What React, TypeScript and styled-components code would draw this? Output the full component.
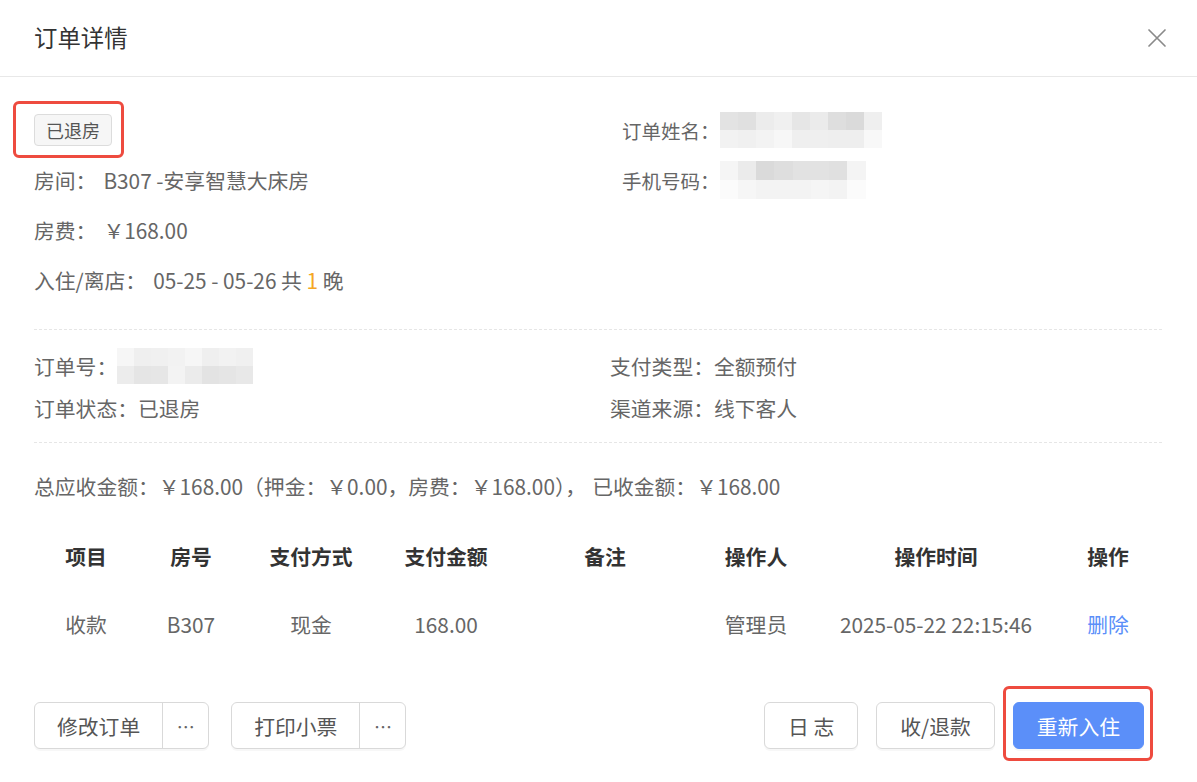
import styled, { createGlobalStyle } from 'styled-components';

const GlobalStyle = createGlobalStyle`
    * {
        box-sizing: border-box;
    }
    html,
    body {
        margin: 0;
        padding: 0;
        background: #fff;
    }
    body {
        font-family: 'Noto Sans CJK SC', 'Noto Sans', sans-serif;
        font-size: 20.8px;
        color: #666;
    }
`;

// pixelated blocks standing in for hidden personal data
const NAME_SHADES = [
    ['#e3e3e3', '#e0e0e0', '#ececec', '#f0f0f0', '#e6e6e6', '#ebebeb', '#dedede', '#dadada', '#efefef'],
    ['#f2f2f2', '#f0f0f0', '#f3f3f3', '#f7f7f7', '#efefef', '#efefef', '#eeeeee', '#eeeeee', '#f8f8f8'],
];
const PHONE_SHADES = [
    ['#f5f5f5', '#ebebeb', '#dadada', '#dedede', '#e2e2e2', '#e2e2e2', '#e0e0e0', '#f4f4f4'],
    ['#fbfbfb', '#f6f6f6', '#f3f3f3', '#f3f3f3', '#f3f3f3', '#f5f5f5', '#f3f3f3', '#fbfbfb'],
];
const ORDER_SHADES = [
    ['#f6f6f6', '#efefef', '#f0f0f0', '#f2f2f2', '#f6f6f6', '#efefef', '#f2f2f2', '#f0f0f0'],
    ['#ececec', '#e5e5e5', '#e6e6e6', '#f3f3f3', '#ebebeb', '#e3e3e3', '#e5e5e5', '#e8e8e8'],
];

const COLUMNS = ['104px', '106px', '134px', '136px', '182px', '120px', '240px', '104px'];
const HEADERS = ['项目', '房号', '支付方式', '支付金额', '备注', '操作人', '操作时间', '操作'];

type Payment = {
    item: string;
    room: string;
    method: string;
    amount: string;
    remark: string;
    operator: string;
    time: string;
};

const payments: Payment[] = [
    {
        item: '收款',
        room: 'B307',
        method: '现金',
        amount: '168.00',
        remark: '',
        operator: '管理员',
        time: '2025-05-22 22:15:46',
    },
];

const Mosaic = ({ shades, cellW, cellH }: { shades: string[][]; cellW: number; cellH: number }) => (
    <MosaicGrid $cols={shades[0].length} $w={cellW} $h={cellH}>
        {shades.flat().map((shade, i) => (
            <MosaicCell key={i} $shade={shade} />
        ))}
    </MosaicGrid>
);

const CloseIcon = () => (
    <svg width='20' height='20' viewBox='0 0 20 20' fill='none'>
        <path d='M2 2 L18 18 M18 2 L2 18' stroke='#8a8a8a' strokeWidth='1.7' strokeLinecap='round' />
    </svg>
);

const App = () => {
    return (
        <>
            <GlobalStyle />
            <Dialog>
                <Header>
                    <Title>订单详情</Title>
                    <CloseButton aria-label='close'>
                        <CloseIcon />
                    </CloseButton>
                </Header>

                <Body>
                    <TopSection>
                        <Column>
                            <Line $h={50}>
                                <Marked $top={-13} $right={-12} $bottom={-12} $left={-21}>
                                    <StatusTag>已退房</StatusTag>
                                </Marked>
                            </Line>
                            <Line $h={50}>
                                房间：<Value>B307 -安享智慧大床房</Value>
                            </Line>
                            <Line $h={50}>
                                房费：<Value>￥168.00</Value>
                            </Line>
                            <Line $h={50}>
                                入住/离店：
                                <Value>
                                    05-25 - 05-26 共 <Nights>1</Nights> 晚
                                </Value>
                            </Line>
                        </Column>
                        <Column $size={19.5}>
                            <Line $h={50}>
                                订单姓名：
                                <Mosaic shades={NAME_SHADES} cellW={18} cellH={18} />
                            </Line>
                            <Line $h={50}>
                                手机号码：
                                <Mosaic shades={PHONE_SHADES} cellW={18.25} cellH={19} />
                            </Line>
                        </Column>
                    </TopSection>

                    <Divider />

                    <InfoSection>
                        <Line $h={42}>
                            订单号：
                            <Mosaic shades={ORDER_SHADES} cellW={17} cellH={18} />
                        </Line>
                        <Line $h={42}>支付类型：全额预付</Line>
                        <Line $h={42}>订单状态：已退房</Line>
                        <Line $h={42}>渠道来源：线下客人</Line>
                    </InfoSection>

                    <Divider />

                    <Summary>
                        总应收金额：￥168.00（押金：￥0.00，房费：￥168.00），<Received>已收金额：￥168.00</Received>
                    </Summary>

                    <Table>
                        <TableRow>
                            {HEADERS.map((h) => (
                                <HeadCell key={h}>{h}</HeadCell>
                            ))}
                        </TableRow>
                        {payments.map((p, i) => (
                            <TableRow key={i}>
                                <Cell>{p.item}</Cell>
                                <Cell>{p.room}</Cell>
                                <Cell>{p.method}</Cell>
                                <Cell>{p.amount}</Cell>
                                <Cell>{p.remark}</Cell>
                                <Cell>{p.operator}</Cell>
                                <Cell>{p.time}</Cell>
                                <Cell>
                                    <LinkButton>删除</LinkButton>
                                </Cell>
                            </TableRow>
                        ))}
                    </Table>

                    <Footer>
                        <ButtonGroup>
                            <SplitButton>
                                <SplitMain>修改订单</SplitMain>
                                <SplitMore>…</SplitMore>
                            </SplitButton>
                            <SplitButton>
                                <SplitMain>打印小票</SplitMain>
                                <SplitMore>…</SplitMore>
                            </SplitButton>
                        </ButtonGroup>
                        <ButtonGroup $gap={18}>
                            <Button>日 志</Button>
                            <Button>收/退款</Button>
                            <Marked $top={-16} $right={-9} $bottom={-12} $left={-10}>
                                <Button $primary>重新入住</Button>
                            </Marked>
                        </ButtonGroup>
                    </Footer>
                </Body>
            </Dialog>
        </>
    );
};

const Dialog = styled.div`
    width: 1197px;
    min-height: 782px;
    background: #fff;
`;

const Header = styled.header`
    height: 77px;
    display: flex;
    align-items: center;
    justify-content: space-between;
    padding: 0 30px 0 34px;
    border-bottom: 1px solid #e8e8e8;
`;

const Title = styled.h2`
    margin: 0;
    font-size: 23.4px;
    font-weight: 400;
    line-height: 1;
    color: #333;
`;

const CloseButton = styled.button`
    display: flex;
    padding: 0;
    border: none;
    background: none;
`;

const Body = styled.div`
    padding: 0 35px 0 34px;
`;

const TopSection = styled.div`
    display: grid;
    grid-template-columns: 588px 1fr;
    padding-top: 28px;
    margin-bottom: 24px;
`;

const Column = styled.div<{ $size?: number }>`
    display: flex;
    flex-direction: column;
    font-size: ${(p) => p.$size ?? 20.8}px;
`;

const InfoSection = styled.div`
    display: grid;
    grid-template-columns: 576px 1fr;
    padding: 15px 0 13px;
`;

const Line = styled.div<{ $h: number }>`
    display: flex;
    align-items: center;
    height: ${(p) => p.$h}px;
    white-space: nowrap;
    color: #666;
`;

const Value = styled.span`
    margin-left: 7px;
`;

const Nights = styled.span`
    color: #f5a623;
`;

const Marked = styled.span<{ $top: number; $right: number; $bottom: number; $left: number }>`
    position: relative;
    display: inline-flex;

    &::after {
        content: '';
        position: absolute;
        top: ${(p) => p.$top}px;
        right: ${(p) => p.$right}px;
        bottom: ${(p) => p.$bottom}px;
        left: ${(p) => p.$left}px;
        border: 3px solid #ee4b3f;
        border-radius: 6px;
        pointer-events: none;
    }
`;

const StatusTag = styled.span`
    display: inline-flex;
    align-items: center;
    height: 32px;
    padding: 0 11px;
    border: 1px solid #dcdcdc;
    border-radius: 4px;
    background: #f6f6f6;
    font-size: 18px;
    color: #555;
`;

const MosaicGrid = styled.span<{ $cols: number; $w: number; $h: number }>`
    display: inline-grid;
    grid-template-columns: repeat(${(p) => p.$cols}, ${(p) => p.$w}px);
    grid-auto-rows: ${(p) => p.$h}px;
`;

const MosaicCell = styled.span<{ $shade: string }>`
    background: ${(p) => p.$shade};
`;

const Divider = styled.hr`
    margin: 0;
    border: none;
    border-top: 1px dashed #e6e6e6;
`;

const Summary = styled.div`
    margin-top: 28px;
    line-height: 30px;
    color: #666;
    white-space: nowrap;
`;

const Received = styled.span`
    margin-left: 6px;
`;

const Table = styled.div`
    margin-top: 21px;
    width: 1128px;
`;

const TableRow = styled.div`
    display: grid;
    grid-template-columns: ${COLUMNS.join(' ')};
    height: 68px;
    align-items: center;
`;

const HeadCell = styled.div`
    text-align: center;
    font-weight: 700;
    color: #333;
`;

const Cell = styled.div`
    text-align: center;
    color: #666;
`;

const LinkButton = styled.a`
    color: #5b8ff9;
    cursor: pointer;
`;

const Footer = styled.div`
    display: flex;
    justify-content: space-between;
    align-items: center;
    margin-top: 44px;
    padding-right: 18px;
`;

const ButtonGroup = styled.div<{ $gap?: number }>`
    display: flex;
    align-items: center;
    gap: ${(p) => p.$gap ?? 22}px;
`;

const Button = styled.button<{ $primary?: boolean }>`
    height: 47px;
    padding: 0 23px;
    border: 1px solid ${(p) => (p.$primary ? '#5b8ff9' : '#d9d9d9')};
    border-radius: 6px;
    background: ${(p) => (p.$primary ? '#5b8ff9' : '#fff')};
    color: ${(p) => (p.$primary ? '#fff' : '#555')};
    font: inherit;
    font-size: 20.8px;
    box-shadow: 0 2px 0 rgba(0, 0, 0, 0.03);
    cursor: pointer;
`;

const SplitButton = styled.div`
    display: flex;
    height: 47px;
    border: 1px solid #d9d9d9;
    border-radius: 6px;
    background: #fff;
    box-shadow: 0 2px 0 rgba(0, 0, 0, 0.03);
`;

const SplitMain = styled.button`
    padding: 0 22px;
    border: none;
    background: none;
    font: inherit;
    font-size: 20.8px;
    color: #555;
`;

const SplitMore = styled.button`
    width: 46px;
    padding: 0;
    border: none;
    border-left: 1px solid #d9d9d9;
    background: none;
    font: inherit;
    font-size: 18px;
    color: #666;
`;

export default App;
